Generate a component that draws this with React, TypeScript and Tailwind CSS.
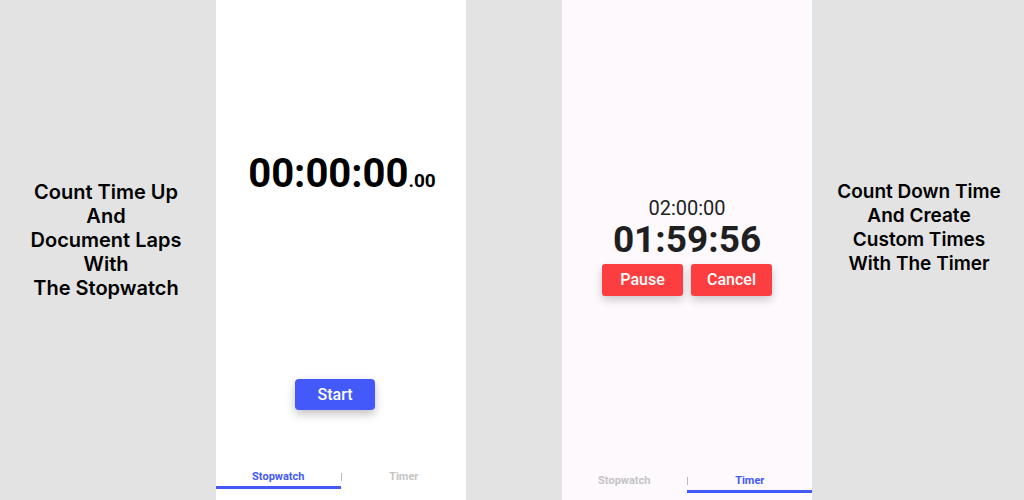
export default function App() {
  return (
    <div className="w-[1024px] h-[500px] bg-[#e3e3e3] flex overflow-hidden" style={{ fontFamily: 'Inter, "Noto Sans", sans-serif' }}>
      <div className="w-[216px] flex items-center justify-center">
        <p className="text-center text-[20px] leading-[24px] font-semibold text-black -mt-[20px] pr-[4px]">
          Count Time Up<br />And<br />Document Laps<br />With<br />The Stopwatch
        </p>
      </div>

      <div className="w-[250px] bg-white flex flex-col" style={{ fontFamily: 'Roboto, sans-serif' }}>
        <div className="h-[150px]" />
        <div className="flex items-baseline justify-center pl-[2px]">
          <span className="text-[40px] leading-[48px] font-bold text-black">00:00:00</span>
          <span className="text-[19px] font-bold text-black">.00</span>
        </div>
        <div className="flex-1" />
        <div className="flex justify-center pr-[12px]">
          <button className="w-[80px] h-[31px] rounded-[4px] bg-[#4459fa] text-white text-[16px] font-medium shadow-[0_4px_10px_rgba(0,0,0,0.25)]">Start</button>
        </div>
        <div className="h-[57px]" />
        <div className="flex h-[20px] items-center relative">
          <div className="flex-1 text-center text-[11px] font-bold text-[#4459fa]">Stopwatch</div>
          <div className="w-px h-[8px] bg-[#bbbbbb]" />
          <div className="flex-1 text-center text-[11px] font-bold text-[#c4c4c4]">Timer</div>
        </div>
        <div className="h-[3px] w-[125px] bg-[#4459fa] mt-[-1px]" />
        <div className="h-[11px]" />
      </div>

      <div className="w-[96px]" />

      <div className="w-[250px] bg-[#fdf9fd] flex flex-col" style={{ fontFamily: 'Roboto, sans-serif' }}>
        <div className="h-[196px]" />
        <div className="text-center text-[20px] leading-[24px] text-[#222222]">02:00:00</div>
        <div className="text-center text-[37px] leading-[40px] font-bold text-[#1f1f22]">01:59:56</div>
        <div className="flex justify-center gap-[8px] mt-[4px]">
          <button className="w-[81px] h-[32px] rounded-[3px] bg-[#fd3e40] text-white text-[16px] font-medium shadow-[0_4px_10px_rgba(0,0,0,0.2)]">Pause</button>
          <button className="w-[81px] h-[32px] rounded-[3px] bg-[#fd3e40] text-white text-[16px] font-medium shadow-[0_4px_10px_rgba(0,0,0,0.2)]">Cancel</button>
        </div>
        <div className="flex-1" />
        <div className="flex h-[20px] items-center">
          <div className="flex-1 text-center text-[11px] font-bold text-[#c4c4c4]">Stopwatch</div>
          <div className="w-px h-[8px] bg-[#bbbbbb]" />
          <div className="flex-1 text-center text-[11px] font-bold text-[#4459fa]">Timer</div>
        </div>
        <div className="flex">
          <div className="w-[125px]" />
          <div className="h-[3px] w-[125px] bg-[#4459fa] mt-[-1px]" />
        </div>
        <div className="h-[7px]" />
      </div>

      <div className="flex-1 flex items-center justify-center">
        <p className="text-center text-[19px] leading-[24px] font-semibold text-black -mt-[44px] pl-[2px]">
          Count Down Time<br />And Create<br />Custom Times<br />With The Timer
        </p>
      </div>
    </div>
  );
}
